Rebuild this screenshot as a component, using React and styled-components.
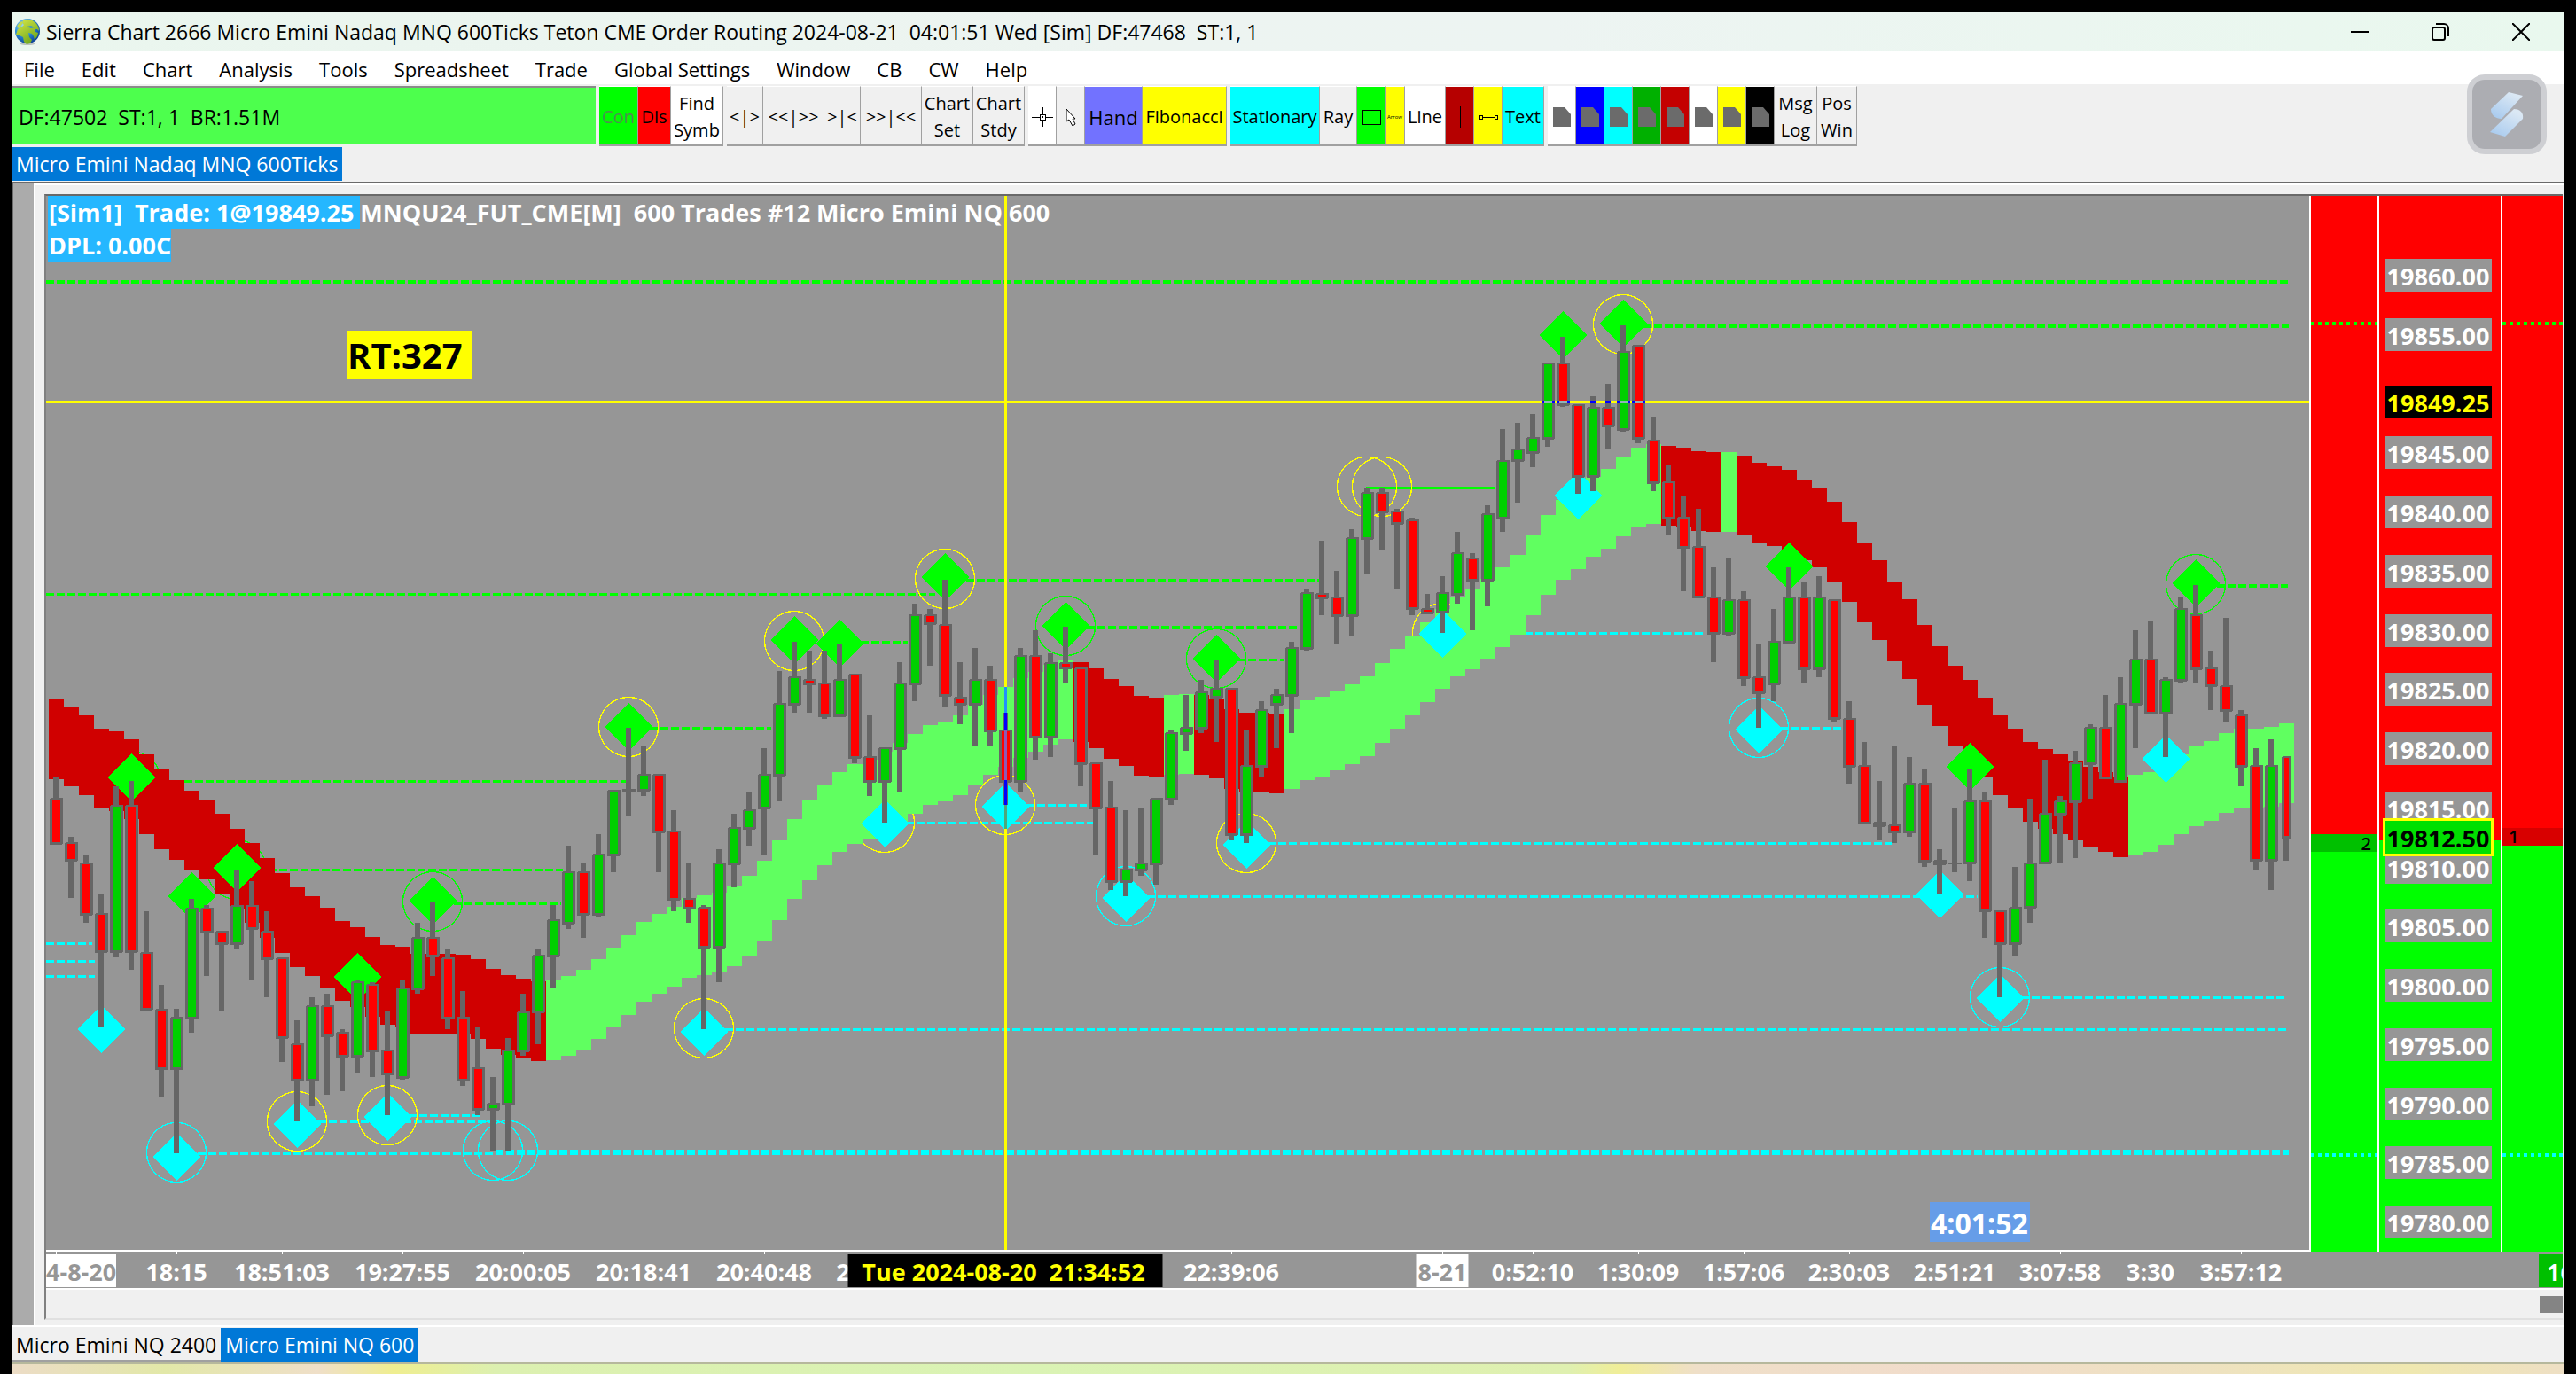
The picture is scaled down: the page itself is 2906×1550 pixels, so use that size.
import React from "react";
import styled, { createGlobalStyle } from "styled-components";

const UI_FONT = '"Open Sans", "Noto Sans", sans-serif';

const GlobalStyle = createGlobalStyle`
  *, *::before, *::after { box-sizing: border-box; }
  html, body { margin: 0; background: #000; }
  body { font-family: ${UI_FONT}; color: #000; overflow: hidden; }
  button { font: inherit; color: inherit; border: 0; margin: 0; padding: 0; background: none; }
`;

/* ---------- window shell ---------- */

const Screen = styled.div`
  display: flex;
  flex-direction: column;
  height: 100vh;
  padding: 13px 13px 0;
  background: #000;
`;

const AppWindow = styled.main`
  position: relative;
  flex: 1;
  min-height: 0;
  display: flex;
  flex-direction: column;
  background: #f0f0f0;
`;

const TitleBar = styled.header`
  display: flex;
  align-items: center;
  height: 45px;
  padding: 0 39px 0 3px;
  gap: 6px;
  background: linear-gradient(90deg, #eaf6ee, #edf4f1 45%, #edf4f2 60%, #e9f8ee);
`;

const Title = styled.h1`
  flex: 1;
  margin: 0;
  font-size: 23px;
  font-weight: 400;
  line-height: 30px;
  white-space: pre;
`;

const WindowControls = styled.div`
  display: flex;
  gap: 71px;
  button { display: flex; }
`;

const MenuBar = styled.nav`
  display: flex;
  align-items: center;
  gap: 30px;
  height: 37px;
  padding: 2px 14px 0;
  background: #fff;
`;

const MenuItem = styled.button`
  font-size: 22px;
  line-height: 30px;
  white-space: nowrap;
`;

/* ---------- toolbar ---------- */

const Toolbar = styled.div`
  display: flex;
  align-items: flex-start;
  gap: 4px;
  height: 70px;
  padding-top: 2px;
`;

const Status = styled.output`
  width: 659px;
  height: 66px;
  padding-left: 8px;
  border-top: 2px solid #8a8a8a;
  background: #4dff4d;
  font-size: 23px;
  line-height: 66px;
  white-space: pre;
`;

const ToolGroup = styled.div`
  display: flex;
  height: 68px;
  border-bottom: 2px solid #a0a0a0;
`;

const Tool = styled.button`
  flex: none;
  display: flex;
  align-items: center;
  justify-content: center;
  width: ${(p) => p.$w}px;
  overflow: hidden;
  padding-top: 2px;
  border-top: 1px solid #fff;
  border-right: 1px solid #a0a0a0;
  background: ${(p) => p.$bg || "#f0f0f0"};
  color: ${(p) => p.$fg || "#000"};
  font-size: ${(p) => p.$size || 20}px;
  line-height: 30px;
  text-align: center;
  white-space: pre;
`;

/* ---------- tabs ---------- */

const TabStrip = styled.div`
  display: flex;
  height: ${(p) => p.$h}px;
  padding-top: 1px;
  border-top: ${(p) => (p.$line ? "2px solid #fff" : "0")};
`;

const Tab = styled.button`
  height: 38px;
  padding: 2px 5px 0;
  font-size: 23px;
  line-height: 34px;
  white-space: nowrap;
  background: ${(p) => (p.$active ? "#0078d7" : "#f0f0f0")};
  color: ${(p) => (p.$active ? "#fff" : "#000")};
  border-bottom: 2px solid ${(p) => (p.$active ? "#0078d7" : "#a0a0a0")};
`;

const Taskbar = styled.footer`
  height: 13px;
  border-top: 2px solid #b6b89c;
  background: linear-gradient(
    90deg,
    #ecdcc6, #e2e8a8 6%, #efdfc8 12%, #efee90 15%, #dcf0b0 19%,
    #daf3b4 40%, #dff0b0 61%, #f0ee98 63%, #efdfc8 66%, #f1dccb 76%,
    #eee2c0 86%, #efe8b0 94%, #eedfc4
  );
`;

/* ---------- chart window ---------- */

const Mdi = styled.section`
  flex: 1;
  min-height: 0;
  display: flex;
  border-top: 2px solid #696969;
`;

const Gutter = styled.div`
  width: 25px;
  border-left: 2px solid #696969;
  background: #ababab;
`;

const ChildWindow = styled.div`
  flex: 1;
  min-width: 0;
  display: flex;
  border-left: 1px solid #fff;
  border-top: 2px solid #fff;
  padding: 10px 2px 6px 11px;
`;

const Pane = styled.div`
  flex: 1;
  min-width: 0;
  display: flex;
  flex-direction: column;
  border-top: 2px solid #696969;
  border-left: 2px solid #808080;
  border-bottom: 2px solid #e0e0e0;
`;

const ChartBody = styled.div`
  flex: 1;
  min-height: 0;
  display: flex;
`;

const Plot = styled.div`
  position: relative;
  flex: 1;
  min-width: 0;
  overflow: hidden;
  background: #969696;
  border-bottom: 2px solid #fff;
`;

const PlotSvg = styled.svg`
  display: block;
  width: 100%;
  height: 100%;
`;

const ChartTitle = styled.div`
  position: absolute;
  left: 2px;
  top: 0;
  color: #fff;
  font-size: 27px;
  font-weight: 700;
  line-height: 37px;
  white-space: pre;
`;

const Highlight = styled.span`
  display: inline-block;
  background: #25b7ff;
  padding-left: 1px;
`;

const Flag = styled.div`
  position: absolute;
  left: ${(p) => p.$x}px;
  top: ${(p) => p.$y}px;
  padding: 2px ${(p) => p.$padEnd || 2}px 0 1px;
  background: ${(p) => p.$bg};
  color: ${(p) => p.$fg};
  font-size: ${(p) => p.$size}px;
  font-weight: 700;
  line-height: ${(p) => p.$lh}px;
`;

const PriceAxis = styled.div`
  display: flex;
  width: 286px;
`;

const AxisColumn = styled.div`
  position: relative;
  width: ${(p) => (p.$w ? p.$w + "px" : "auto")};
  flex: ${(p) => (p.$w ? "none" : 1)};
  border-left: 2px solid #fff;
  background:
    ${(p) =>
      p.$dots
        ? "repeating-linear-gradient(90deg, #0f0 0 4px, transparent 4px 8px) 0 142px / 100% 4px no-repeat, repeating-linear-gradient(90deg, #0ff 0 4px, transparent 4px 8px) 0 1080px / 100% 4px no-repeat,"
        : ""}
    linear-gradient(
      #f00 ${(p) => p.$from}px,
      ${(p) => p.$mix} ${(p) => p.$from}px ${(p) => p.$to}px,
      #0f0 ${(p) => p.$to}px
    );
`;

const DepthSize = styled.span`
  position: absolute;
  top: ${(p) => p.$y}px;
  ${(p) => p.$side}: 7px;
  font-size: 20px;
  font-weight: 600;
  line-height: 24px;
`;

const Ladder = styled.div`
  display: flex;
  flex-direction: column;
  justify-content: space-between;
  align-items: flex-start;
  height: 1176px;
  padding: 71px 0 0 6px;
`;

const Price = styled.span`
  width: 121px;
  padding-top: 2px;
  background: #969696;
  color: #fff;
  font-size: 27px;
  font-weight: 700;
  line-height: 35px;
  text-align: center;
  visibility: ${(p) => (p.$hidden ? "hidden" : "visible")};
`;

const PriceTag = styled.span`
  position: absolute;
  left: ${(p) => (p.$outline ? 4 : 6)}px;
  top: ${(p) => p.$y}px;
  border: ${(p) => (p.$outline ? "3px solid #ff0" : "0")};
  background: ${(p) => p.$bg};
  color: ${(p) => p.$fg};
  width: ${(p) => (p.$outline ? 125 : 121)}px;
  padding-top: 2px;
  display: flex;
  justify-content: center;
  font-size: 27px;
  font-weight: 700;
  line-height: 35px;
`;

const TimeAxis = styled.div`
  position: relative;
  height: 41px;
  overflow: hidden;
  background: #969696;
  color: #fff;
  font-size: 27px;
  font-weight: 700;
  line-height: 35px;
`;

const Tick = styled.span`
  position: absolute;
  top: 0;
  width: 1px;
  height: 3px;
  background: #fff;
`;

const TimeLabel = styled.span`
  position: absolute;
  top: 3px;
  transform: ${(p) => (p.$flush ? "none" : "translateX(-50%)")};
  padding: 2px ${(p) => (p.$flush ? 0 : 2)}px 0;
  white-space: pre;
  background: ${(p) => (p.$day ? "#fff" : "transparent")};
  color: ${(p) => (p.$day ? "#969696" : "#fff")};
`;

const CursorTime = styled.span`
  position: absolute;
  top: 3px;
  width: 355px;
  padding: 2px 4px 0 0;
  transform: translateX(-50%);
  background: #000;
  color: #ff0;
  text-align: center;
  white-space: pre;
`;

const EndTime = styled.span`
  position: absolute;
  top: 3px;
  right: 0;
  width: 27px;
  padding: 2px 0 0 9px;
  overflow: hidden;
  background: #00c000;
`;

const ScrollTrack = styled.div`
  display: flex;
  justify-content: flex-end;
  align-items: center;
  height: 34px;
  border-top: 2px solid #fff;
`;

const ScrollThumb = styled.div`
  width: 26px;
  height: 19px;
  background: #848484;
`;

const SnagitButton = styled.button`
  position: absolute;
  right: 20px;
  top: 71px;
  width: 90px;
  height: 90px;
  display: flex;
  align-items: center;
  justify-content: center;
  border: 6px solid #cecfd3;
  border-radius: 20px;
  background: #acadb2;
`;

/* ---------- chart data ---------- */

const STEP = 17;
const FIRST = 11;
const UNIT = 2.24;

/* bar: [direction, high, bodyTop, bodyBottom, low]
   mark: [bar, colour, level] for both diamonds and rings */
const SEGMENTS = [
  {
    origin: 479,
    start: 0,
    bars: [
      ["d", 397, 449, 567, 567], ["d", 547, 560, 610, 702], ["d", 591, 612, 745, 763],
      ["d", 690, 740, 840, 1026], ["u", 419, 465, 841, 852], ["d", 405, 465, 841, 882],
      ["d", 735, 837, 986, 986], ["d", 921, 980, 1135, 1205], ["u", 981, 1001, 1135, 1346],
      ["u", 703, 725, 1007, 1042], ["d", 719, 725, 790, 898], ["d", 785, 785, 820, 988],
      ["u", 629, 718, 820, 830], ["d", 659, 718, 782, 907], ["d", 735, 785, 857, 951],
      ["d", 851, 851, 1058, 1116], ["d", 1010, 1069, 1165, 1266], ["u", 952, 972, 1165, 1228],
      ["d", 943, 972, 1052, 1198], ["d", 1033, 1040, 1104, 1189], ["u", 907, 912, 1104, 1145],
      ["d", 914, 918, 1090, 1154], ["d", 988, 1084, 1148, 1250], ["u", 907, 928, 1158, 1160],
      ["u", 764, 800, 934, 942], ["d", 712, 800, 851, 898], ["d", 831, 851, 1007, 1033],
      ["d", 936, 1001, 1165, 1176], ["d", 1026, 1129, 1239, 1250], ["u", 1154, 1219, 1239, 1340],
      ["u", 1055, 1084, 1225, 1340], ["u", 943, 987, 1090, 1100], ["u", 831, 845, 992, 1071],
      ["u", 719, 755, 851, 930], ["u", 569, 634, 768, 780], ["d", 614, 634, 745, 802],
      ["u", 540, 590, 745, 748], ["u", 427, 427, 595, 636],
    ],
    band: [
      199, 217, 240, 273, 280, 300, 338, 376, 403, 430, 452, 488, 526, 562, 600, 638, 674, 697,
      726, 759, 775, 800, 820, 824, 842, 842, 842, 844, 856, 880, 896, 905, 911, 909, 898, 883,
      856, 827,
    ],
    diamonds: [
      [5, "g", 397], [9, "g", 697], [12, "g", 626], [20, "g", 900], [25, "g", 708],
      [3, "c", 1033], [8, "c", 1356], [16, "c", 1272], [22, "c", 1255],
    ],
    rings: [
      [5, "g", 405], [12, "g", 630], [25, "g", 710], [8, "c", 1345], [29, "c", 1339],
      [30, "c", 1339], [16, "y", 1265], [22, "y", 1249],
    ],
  },
  {
    origin: 359,
    start: 38,
    bars: [
      ["n", 540, 695, 700, 764], ["u", 585, 656, 700, 712], ["d", 656, 656, 806, 905],
      ["d", 748, 799, 976, 1004], ["d", 883, 970, 998, 1033], ["d", 988, 992, 1098, 1301],
      ["u", 847, 880, 1098, 1183], ["u", 757, 791, 887, 943], ["u", 703, 746, 797, 838],
      ["u", 591, 656, 746, 860], ["u", 396, 477, 663, 726], ["u", 323, 410, 484, 502],
      ["d", 345, 417, 432, 502], ["d", 345, 426, 512, 517], ["u", 329, 417, 513, 513],
      ["d", 403, 403, 618, 629], ["d", 508, 612, 679, 712], ["u", 589, 589, 679, 780],
      ["u", 374, 426, 596, 703], ["u", 226, 253, 432, 473], ["d", 240, 253, 281, 383],
      ["d", 166, 277, 461, 486], ["d", 374, 462, 484, 531], ["u", 338, 417, 484, 585],
      ["d", 383, 417, 551, 585], ["d", 502, 544, 679, 735], ["u", 338, 357, 679, 703],
      ["d", 293, 357, 567, 620], ["u", 352, 373, 567, 614], ["d", 284, 373, 393, 428],
      ["d", 387, 387, 633, 688], ["d", 627, 627, 745, 860], ["d", 674, 739, 931, 950],
      ["u", 748, 896, 931, 965], ["u", 741, 880, 902, 914], ["u", 717, 717, 887, 936],
    ],
    band: [
      1064, 1030, 1010, 992, 970, 964, 956, 940, 914, 876, 824, 771, 724, 685, 652, 632, 620, 600,
      578, 556, 533, 524, 508, 482, 457, 437, 415, 398, 380, 368, 374, 390, 417, 435, 459, 464,
    ],
    diamonds: [
      [38, "g", 537], [49, "g", 319], [52, "g", 327], [59, "g", 160], [67, "g", 282],
      [43, "c", 1309], [55, "c", 782], [63, "c", 740], [71, "c", 970],
    ],
    rings: [
      [38, "y", 538], [43, "y", 1300], [49, "y", 320], [59, "y", 164], [55, "y", 779],
      [63, "y", 734], [67, "g", 282], [71, "c", 965],
    ],
  },
  {
    origin: 259,
    start: 74,
    bars: [
      ["u", 771, 774, 948, 959], ["u", 681, 762, 781, 822], ["u", 643, 672, 768, 777],
      ["u", 591, 663, 691, 800], ["d", 663, 663, 1036, 1048], ["u", 771, 858, 1036, 1055],
      ["u", 697, 717, 865, 889], ["u", 665, 679, 707, 815], ["u", 547, 560, 685, 777],
      ["u", 412, 422, 567, 569], ["d", 291, 423, 438, 479], ["d", 367, 432, 484, 553],
      ["u", 262, 282, 484, 531], ["u", 157, 169, 288, 374], ["d", 157, 169, 222, 314],
      ["d", 211, 215, 250, 412], ["d", 233, 237, 467, 479], ["d", 426, 461, 476, 476],
      ["u", 381, 422, 475, 524], ["u", 269, 320, 430, 450], ["d", 323, 333, 394, 517],
      ["u", 202, 222, 394, 457], ["u", 9, 87, 237, 269],
    ],
    band: [
      681, 679, 681, 690, 717, 726, 726, 728, 717, 694, 685, 670, 654, 634, 600, 564, 531, 497,
      463, 432, 414, 387, 358,
    ],
    diamonds: [[77, "g", 588], [79, "c", 1060], [92, "c", 527]],
    rings: [
      [77, "g", 590], [79, "y", 1054], [87, "y", 155], [88, "y", 155], [92, "y", 524],
    ],
  },
  {
    origin: 79,
    start: 97,
    bars: [
      ["u", 396, 461, 496, 598], ["u", 374, 432, 474, 508], ["u", 244, 244, 438, 457],
      ["d", 179, 244, 353, 357], ["d", 350, 350, 535, 576], ["u", 329, 356, 535, 569],
      ["d", 298, 356, 407, 464], ["u", 150, 215, 416, 418], ["d", 199, 199, 438, 447],
      ["d", 381, 440, 550, 569], ["d", 502, 544, 640, 681], ["d", 582, 634, 714, 822],
      ["d", 614, 708, 841, 841], ["d", 762, 836, 931, 1001], ["u", 739, 842, 931, 934],
      ["d", 822, 842, 1043, 1061], ["d", 956, 1038, 1081, 1167], ["u", 867, 948, 1059, 1100],
      ["u", 762, 836, 954, 956], ["d", 800, 836, 1021, 1055], ["u", 784, 836, 1021, 1039],
      ["d", 842, 842, 1147, 1151], ["d", 1100, 1142, 1268, 1308], ["d", 1203, 1261, 1411, 1411],
      ["n", 1301, 1405, 1417, 1452], ["d", 1212, 1411, 1433, 1458], ["u", 1241, 1306, 1434, 1443],
      ["d", 1270, 1306, 1507, 1519],
    ],
    band: [
      730, 681, 629, 591, 564, 533, 513, 482, 459, 450, 455, 459, 468, 470, 470, 479, 497, 506,
      515, 542, 560, 596, 647, 699, 744, 797, 842, 907,
    ],
    diamonds: [
      [100, "g", 175], [104, "g", 145], [115, "g", 760], [101, "c", 581], [113, "c", 1172],
    ],
    rings: [[104, "y", 148], [113, "c", 1166]],
  },
  {
    origin: 329,
    start: 125,
    bars: [
      ["n", 914, 941, 954, 1026], ["n", 809, 948, 953, 972], ["u", 710, 791, 953, 995],
      ["d", 771, 791, 1074, 1138], ["d", 1068, 1068, 1156, 1288], ["u", 959, 1060, 1156, 1183],
      ["u", 786, 948, 1065, 1100], ["u", 688, 822, 953, 953], ["u", 780, 790, 828, 950],
      ["u", 665, 694, 797, 936], ["u", 598, 605, 700, 786], ["d", 524, 605, 737, 737],
      ["u", 479, 544, 745, 745], ["u", 361, 432, 550, 659], ["d", 338, 432, 573, 573],
      ["u", 479, 484, 573, 681], ["u", 278, 305, 490, 495], ["d", 246, 320, 461, 495],
      ["d", 412, 455, 505, 562], ["d", 329, 500, 567, 591], ["d", 562, 573, 707, 755],
      ["d", 659, 701, 946, 965], ["u", 636, 701, 946, 1017], ["d", 679, 679, 887, 943],
    ],
    band: [
      401, 450, 486, 531, 576, 609, 643, 661, 674, 690, 706, 720, 732, 726, 719, 701, 674, 654,
      641, 620, 609, 609, 605, 596,
    ],
    diamonds: [
      [125, "c", 1029], [127, "g", 706], [142, "g", 241], [129, "c", 1291], [140, "c", 686],
    ],
    rings: [[142, "g", 244], [129, "c", 1287]],
  },
];

const RISING = [[33, 67], [74, 75], [82, 106], [111, 111], [138, 148]];
const BAND_HEIGHT = 90;
const COLORS = { g: "#00ff00", c: "#00ffff", y: "#ffff00" };

/* level: [x1, x2, top, colour, thickness, solid] */
const LEVELS = [
  [0, 2530, 95, "g", 4], [1778, 2530, 145, "g", 4], [96, 655, 659, "g", 3],
  [215, 583, 759, "g", 3], [436, 581, 796, "g", 4], [0, 1003, 448, "g", 3],
  [657, 818, 599, "g", 3], [895, 972, 502, "g", 4], [1014, 1436, 432, "g", 3],
  [1150, 1415, 485, "g", 4], [1320, 1397, 522, "g", 3], [1489, 1635, 328, "g", 3, true],
  [2425, 2529, 438, "g", 4],
  [0, 52, 842, "c", 3], [0, 55, 862, "c", 3], [0, 55, 879, "c", 3],
  [147, 2530, 1079, "c", 3], [507, 2530, 1076, "c", 3], [283, 504, 1043, "c", 3],
  [385, 493, 1036, "c", 3], [742, 2528, 939, "c", 3], [946, 1181, 706, "c", 3],
  [1082, 1174, 686, "c", 3], [1218, 2179, 789, "c", 3], [1354, 2082, 729, "c", 3],
  [1584, 1871, 492, "c", 3], [1932, 2026, 599, "c", 3], [2204, 2526, 903, "c", 3],
];

const barX = (k) => FIRST + STEP * k;
const levelY = (origin, v) => Math.round(origin + v / UNIT);

const bars = SEGMENTS.flatMap((s) =>
  s.bars.map(([dir, high, top, bottom, low], i) => ({
    k: s.start + i,
    dir,
    high: levelY(s.origin, high),
    top: levelY(s.origin, top),
    bottom: levelY(s.origin, bottom),
    low: levelY(s.origin, low),
  }))
);
const band = SEGMENTS.flatMap((s) =>
  s.band.map((v, i) => {
    const k = s.start + i;
    return { k, y: levelY(s.origin, v), up: RISING.some(([a, b]) => k >= a && k <= b) };
  })
);
const collect = (name) =>
  SEGMENTS.flatMap((s) =>
    s[name].map(([k, c, v]) => ({ x: barX(k), y: levelY(s.origin, v), color: COLORS[c] }))
  );
const diamonds = collect("diamonds");
const rings = collect("rings");

function Candle({ k, dir, high, top, bottom, low }) {
  const x = barX(k);
  const last = k === 148;
  const w = last ? 11 : 15;
  const left = x - (last ? 5 : 7);
  const inner = bottom - top - 5;
  return (
    <g>
      <rect x={x - 3} y={high} width={6} height={low - high} fill="#666" />
      <rect x={left} y={top} width={w} height={bottom - top} rx={2} fill="#666" />
      {dir !== "n" && (
        <rect
          x={left + 3}
          y={top + 2}
          width={w - 6}
          height={Math.max(1, inner)}
          fill={dir === "u" ? "#00d000" : "#ff0000"}
        />
      )}
    </g>
  );
}

function PriceChart() {
  return (
    <PlotSvg role="img" aria-label="600 trade candlestick chart" shapeRendering="crispEdges">
      {LEVELS.map(([x1, x2, top, c, thickness, solid], i) => (
        <line
          key={i}
          x1={x1}
          x2={x2}
          y1={top + thickness / 2}
          y2={top + thickness / 2}
          stroke={COLORS[c]}
          strokeWidth={thickness}
          strokeDasharray={solid ? undefined : "9 3"}
          shapeRendering="auto"
        />
      ))}
      {rings.map((r, i) => (
        <circle key={i} cx={r.x} cy={r.y} r={33.5} fill="none" stroke={r.color} strokeWidth={1.3} />
      ))}
      {band.map((b) => (
        <rect
          key={b.k}
          x={barX(b.k) - 8}
          y={b.y}
          width={STEP}
          height={BAND_HEIGHT}
          fill={b.up ? "#60ff60" : "#d00000"}
        />
      ))}
      {diamonds.map((d, i) => (
        <path key={i} d={`M${d.x} ${d.y - 27}l27 27l-27 27l-27 -27z`} fill={d.color} />
      ))}
      {bars.map((b) => (
        <Candle key={b.k} {...b} />
      ))}
      <rect x={0} y={231} width="100%" height={3} fill="#ffff00" />
      <rect x={1081} y={0} width={3} height="100%" fill="#ffff00" />
      {[99, 100, 104, 105].map((k) => (
        <g key={k}>
          <rect x={barX(k) - 7} y={231} width={15} height={3} fill="#0000ff" />
          <rect x={barX(k) - 4} y={231} width={9} height={3} fill="#8fb4b8" />
        </g>
      ))}
      {[102, 103].map((k) => (
        <rect key={k} x={barX(k) - 3} y={231} width={6} height={3} fill="#0000ff" />
      ))}
      <rect x={1081} y={554} width={3} height={29} fill="#1e90ff" />
      <rect x={1081} y={583} width={3} height={20} fill="#0000ff" />
      <rect x={1081} y={603} width={3} height={56} fill="#8c5ab4" />
      <rect x={1081} y={659} width={3} height={28} fill="#0000ff" />
      <rect x={1081} y={687} width={3} height={27} fill="#4fa67a" />
    </PlotSvg>
  );
}

/* ---------- icons ---------- */

function Globe() {
  return (
    <svg width="30" height="32" viewBox="0 0 30 32" aria-hidden="true">
      <defs>
        <radialGradient id="sea" cx="0.35" cy="0.3" r="0.75">
          <stop offset="0" stopColor="#a8dcf5" />
          <stop offset="0.5" stopColor="#2e8fd6" />
          <stop offset="1" stopColor="#0a3f96" />
        </radialGradient>
        <linearGradient id="land" x1="0" y1="0" x2="0.6" y2="1">
          <stop offset="0" stopColor="#dcea4a" />
          <stop offset="1" stopColor="#6fa81c" />
        </linearGradient>
      </defs>
      <ellipse cx="15" cy="29" rx="9" ry="2" fill="#b9c2bd" />
      <circle cx="15" cy="15" r="14" fill="url(#sea)" />
      <path
        d="M10 3c4-2 9-2 13 2 3 2 5 6 5 10l-2-2-3 0 1 3 3 1-1 4-3 4-1-4-2-3-4-1 1 5 3 3-2 4-4 1-3-3-1-5-4-2-4-1 2-6 5-3 2-2-2-2z"
        fill="url(#land)"
      />
      <path d="M3 11c1-4 3-6 6-7l0 3-3 5z" fill="#c2d94c" />
      <path d="M14 10l5-1 4 2-4 1z" fill="#3b93c9" />
    </svg>
  );
}

const MinimizeIcon = () => (
  <svg width="20" height="20" aria-hidden="true">
    <path d="M0 10h20" stroke="#000" strokeWidth="2" />
  </svg>
);
const RestoreIcon = () => (
  <svg width="20" height="20" fill="none" stroke="#000" strokeWidth="2" aria-hidden="true">
    <rect x="1" y="5" width="14" height="14" rx="2" />
    <path d="M5 1h9a5 5 0 0 1 5 5v9" />
  </svg>
);
const CloseIcon = () => (
  <svg width="20" height="20" stroke="#000" strokeWidth="2" aria-hidden="true">
    <path d="M0 0L20 20M20 0L0 20" />
  </svg>
);
const CrosshairIcon = () => (
  <svg width="24" height="24" fill="none" stroke="#000" strokeWidth="1" shapeRendering="crispEdges" aria-hidden="true">
    <path d="M12 1v8M12 15v8M0 12h9M15 12h9" />
    <rect x="9" y="9" width="6" height="6" />
    <path d="M12 11v2" />
  </svg>
);
const PointerIcon = () => (
  <svg width="14" height="22" fill="#fff" stroke="#000" aria-hidden="true">
    <path d="M2 2v14l3-2 4 7 3-2-3-6h3z" />
  </svg>
);
const BoxIcon = () => (
  <svg width="22" height="18" fill="none" stroke="#000" strokeWidth="1" shapeRendering="crispEdges" aria-hidden="true">
    <rect x="1" y="1" width="20" height="16" />
  </svg>
);
const VerticalIcon = () => (
  <svg width="4" height="26" shapeRendering="crispEdges" aria-hidden="true">
    <path d="M2 1v24" stroke="#000" strokeWidth="1" />
  </svg>
);
const SpanIcon = () => (
  <svg width="22" height="8" fill="none" stroke="#000" shapeRendering="crispEdges" aria-hidden="true">
    <rect x="1" y="2" width="3" height="4" />
    <rect x="18" y="2" width="3" height="4" />
    <path d="M4 4h14" strokeWidth="1" />
  </svg>
);
const DocIcon = () => (
  <svg width="20" height="22" fill="#6b6b6b" aria-hidden="true">
    <path d="M0 0h13l7 8v14H0z" />
  </svg>
);
const BoltIcon = () => (
  <svg width="40" height="52" viewBox="0 0 40 52" aria-hidden="true">
    <defs>
      <linearGradient id="bolt" x1="0" y1="1" x2="0.6" y2="0">
        <stop offset="0" stopColor="#a4c8ee" />
        <stop offset="1" stopColor="#dbe8f4" />
      </linearGradient>
    </defs>
    <path d="M22 1L38 5 14 31C7 31 2 27 2 20z" fill="url(#bolt)" />
    <path d="M28 20c7 0 11 4 10 11L18 51 1 46z" fill="url(#bolt)" />
  </svg>
);

/* ---------- content ---------- */

const MENU = [
  "File", "Edit", "Chart", "Analysis", "Tools", "Spreadsheet", "Trade", "Global Settings",
  "Window", "CB", "CW", "Help",
];

const TOOL_GROUPS = [
  [
    { w: 44, bg: "#00ff00", fg: "#4f8f4f", text: "Con" },
    { w: 37, bg: "#ff0000", text: "Dis" },
    { w: 59, bg: "#fff", text: "Find\nSymb" },
  ],
  [
    { w: 41, text: "<|>" },
    { w: 69, text: "<<|>>" },
    { w: 41, text: ">|<" },
    { w: 69, text: ">>|<<" },
    { w: 58, text: "Chart\nSet" },
    { w: 58, text: "Chart\nStdy" },
  ],
  [
    { w: 32, bg: "#fff", icon: CrosshairIcon, label: "Crosshair" },
    { w: 32, icon: PointerIcon, label: "Pointer" },
    { w: 65, bg: "#7272ff", text: "Hand", size: 22 },
    { w: 95, bg: "#ffff00", text: "Fibonacci" },
  ],
  [
    { w: 101, bg: "#00ffff", text: "Stationary" },
    { w: 42, text: "Ray" },
    { w: 32, bg: "#00ff00", icon: BoxIcon, label: "Rectangle" },
    { w: 22, bg: "#ffff00", text: "Arrow", size: 6 },
    { w: 46, bg: "#fff", text: "Line" },
    { w: 32, bg: "#b60000", icon: VerticalIcon, label: "Vertical line" },
    { w: 32, bg: "#ffff00", icon: SpanIcon, label: "Horizontal span" },
    { w: 47, bg: "#00ffff", text: "Text" },
  ],
  [
    ...["#fff", "#0000ff", "#00ffff", "#00b000", "#c40000", "#fff", "#ffff00", "#000"].map(
      (bg, i) => ({ w: 32, bg, icon: DocIcon, label: `Study collection ${i + 1}` })
    ),
    { w: 48, text: "Msg\nLog" },
    { w: 45, text: "Pos\nWin" },
  ],
];

const PRICES = Array.from({ length: 17 }, (_, i) => 19860 - i * 5);

const TIMES = [
  [147, "18:15"], [266, "18:51:03"], [402, "19:27:55"], [538, "20:00:05"], [674, "20:18:41"],
  [810, "20:40:48"], [899, "2"], [1337, "22:39:06"], [1575, "8-21", true], [1677, "0:52:10"],
  [1796, "1:30:09"], [1915, "1:57:06"], [2034, "2:30:03"], [2153, "2:51:21"],
  [2272, "3:07:58"], [2374, "3:30"], [2476, "3:57:12"],
];

export default function App() {
  return (
    <Screen>
      <GlobalStyle />
      <AppWindow>
        <TitleBar>
          <Globe />
          <Title>
            {"Sierra Chart 2666 Micro Emini Nadaq MNQ 600Ticks Teton CME Order Routing 2024-08-21  04:01:51 Wed [Sim] DF:47468  ST:1, 1"}
          </Title>
          <WindowControls>
            <button aria-label="Minimize"><MinimizeIcon /></button>
            <button aria-label="Restore"><RestoreIcon /></button>
            <button aria-label="Close"><CloseIcon /></button>
          </WindowControls>
        </TitleBar>

        <MenuBar>
          {MENU.map((m) => (
            <MenuItem key={m}>{m}</MenuItem>
          ))}
        </MenuBar>

        <Toolbar>
          <Status>{"DF:47502  ST:1, 1  BR:1.51M"}</Status>
          {TOOL_GROUPS.map((group, g) => (
            <ToolGroup key={g}>
              {group.map(({ w, bg, fg, text, size, icon: Icon, label }, i) => (
                <Tool key={i} $w={w} $bg={bg} $fg={fg} $size={size} aria-label={label}>
                  {Icon ? <Icon /> : text}
                </Tool>
              ))}
            </ToolGroup>
          ))}
        </Toolbar>

        <TabStrip $h={40}>
          <Tab $active>Micro Emini Nadaq MNQ 600Ticks</Tab>
        </TabStrip>

        <Mdi>
          <Gutter />
          <ChildWindow>
            <Pane>
              <ChartBody>
                <Plot>
                  <PriceChart />
                  <ChartTitle>
                    <Highlight>{"[Sim1]  Trade: 1@19849.25 "}</Highlight>
                    {"MNQU24_FUT_CME[M]  600 Trades #12 Micro Emini NQ 600\n"}
                    <Highlight>DPL: 0.00C</Highlight>
                  </ChartTitle>
                  <Flag $x={339} $y={152} $bg="#ffff00" $fg="#000" $size={40} $lh={52} $padEnd={11}>
                    RT:327
                  </Flag>
                  <Flag $x={2125} $y={1135} $bg="#669de8" $fg="#fff" $size={32} $lh={43}>
                    4:01:52
                  </Flag>
                </Plot>
                <PriceAxis>
                  <AxisColumn $w={77} $from={720} $to={740} $mix="#00c000" $dots>
                    <DepthSize $side="right" $y={719}>2</DepthSize>
                  </AxisColumn>
                  <AxisColumn $w={139} $from={727} $to={727} $mix="#0f0">
                    <Ladder>
                      {PRICES.map((p) => (
                        <Price key={p} $hidden={p === 19850}>{p.toFixed(2)}</Price>
                      ))}
                    </Ladder>
                    <PriceTag $y={214} $bg="#000" $fg="#ff0">19849.25</PriceTag>
                    <PriceTag $y={702} $bg="#00e000" $fg="#000" $outline>19812.50</PriceTag>
                  </AxisColumn>
                  <AxisColumn $from={713} $to={733} $mix="#d80000" $dots>
                    <DepthSize $side="left" $y={711}>1</DepthSize>
                  </AxisColumn>
                </PriceAxis>
              </ChartBody>

              <TimeAxis>
                <Tick style={{ left: FIRST }} />
                <TimeLabel $day $flush>4-8-20</TimeLabel>
                {TIMES.map(([x, t, day]) => (
                  <React.Fragment key={t}>
                    {t !== "2" && <Tick style={{ left: x }} />}
                    <TimeLabel $day={day} style={{ left: x }}>{t}</TimeLabel>
                  </React.Fragment>
                ))}
                <CursorTime style={{ left: barX(63) }}>{"Tue 2024-08-20  21:34:52"}</CursorTime>
                <EndTime>16</EndTime>
              </TimeAxis>

              <ScrollTrack>
                <ScrollThumb />
              </ScrollTrack>
            </Pane>
          </ChildWindow>
        </Mdi>

        <TabStrip $h={42} $line>
          <Tab>Micro Emini NQ 2400</Tab>
          <Tab $active>Micro Emini NQ 600</Tab>
        </TabStrip>
        <Taskbar />

        <SnagitButton aria-label="Snagit capture">
          <BoltIcon />
        </SnagitButton>
      </AppWindow>
    </Screen>
  );
}
